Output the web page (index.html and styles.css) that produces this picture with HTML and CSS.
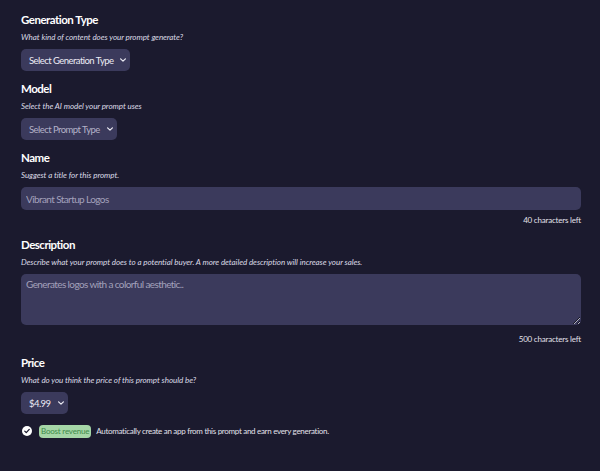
FILE: index.html
```html
<!DOCTYPE html>
<html lang="en">
<head>
<meta charset="utf-8">
<title>Prompt details</title>
<link rel="stylesheet" href="styles.css">
</head>
<body>
<form class="form">
  <section class="field">
    <h2 class="field-title">Generation Type</h2>
    <p class="field-hint">What kind of content does your prompt generate?</p>
    <div class="select">
      <span class="select-text">Select Generation Type</span>
      <svg class="chev" viewBox="0 0 10 6" width="6" height="4"><path d="M1 1l4 4 4-4" fill="none" stroke="currentColor" stroke-width="2" stroke-linecap="round" stroke-linejoin="round"/></svg>
    </div>
  </section>
  <section class="field">
    <h2 class="field-title">Model</h2>
    <p class="field-hint">Select the AI model your prompt uses</p>
    <div class="select muted">
      <span class="select-text">Select Prompt Type</span>
      <svg class="chev" viewBox="0 0 10 6" width="6" height="4"><path d="M1 1l4 4 4-4" fill="none" stroke="currentColor" stroke-width="2" stroke-linecap="round" stroke-linejoin="round"/></svg>
    </div>
  </section>
  <section class="field">
    <h2 class="field-title">Name</h2>
    <p class="field-hint">Suggest a title for this prompt.</p>
    <input class="text-input" type="text" placeholder="Vibrant Startup Logos">
    <p class="count">40 characters left</p>
  </section>
  <section class="field">
    <h2 class="field-title">Description</h2>
    <p class="field-hint">Describe what your prompt does to a potential buyer. A more detailed description will increase your sales.</p>
    <textarea class="text-area" placeholder="Generates logos with a colorful aesthetic.."></textarea>
    <p class="count">500 characters left</p>
  </section>
  <section class="field">
    <h2 class="field-title">Price</h2>
    <p class="field-hint">What do you think the price of this prompt should be?</p>
    <div class="select">
      <span class="select-text">$4.99</span>
      <svg class="chev" viewBox="0 0 10 6" width="6" height="4"><path d="M1 1l4 4 4-4" fill="none" stroke="currentColor" stroke-width="2" stroke-linecap="round" stroke-linejoin="round"/></svg>
    </div>
  </section>
  <div class="boost">
    <svg class="check" viewBox="0 0 20 20" width="10" height="10"><circle cx="10" cy="10" r="10" fill="#ffffff"/><path d="M5.5 10.2l3 3 6-6.4" fill="none" stroke="#1b1a2e" stroke-width="2.6" stroke-linecap="round" stroke-linejoin="round"/></svg>
    <span class="badge">Boost revenue</span>
    <span class="boost-text">Automatically create an app from this prompt and earn every generation.</span>
  </div>
</form>
</body>
</html>
```
FILE: styles.css
```css
* { box-sizing: border-box; }
html, body { margin: 0; padding: 0; }
body {
  background: #1b1a2e;
  color: #ffffff;
  font-family: Lato, "DejaVu Sans Condensed", sans-serif;
  width: 600px;
  height: 471px;
  overflow: hidden;
}
.form {
  display: flex;
  flex-direction: column;
  padding: 12px 19px 0 21px;
}
.field {
  display: flex;
  flex-direction: column;
  align-items: flex-start;
  margin-bottom: 10px;
}
.field-title {
  margin: 0 0 4px;
  font-size: 11.5px;
  line-height: 16px;
  font-weight: 700;
  letter-spacing: -0.5px;
  color: #ffffff;
}
.field-hint {
  margin: 0 0 6px;
  font-size: 8px;
  line-height: 11px;
  font-style: italic;
  letter-spacing: -0.05px;
  color: #dcdbe6;
}
.select {
  display: inline-flex;
  align-items: center;
  gap: 7px;
  height: 22px;
  padding: 0 4px 0 8px;
  background: #3b3a5c;
  border-radius: 5px;
  color: #ecebf4;
  font-size: 9.5px;
  letter-spacing: -0.55px;
}
.select.muted { color: #b4b2c8; }
.chev { display: block; color: #ecebf4; }
.text-input, .text-area {
  display: block;
  width: 100%;
  border: none;
  border-radius: 5px;
  background: #3b3a5c;
  color: #ecebf4;
  font-family: inherit;
  font-size: 10px;
  letter-spacing: -0.6px;
  outline: none;
  margin: 0;
}
.text-input { height: 23px; padding: 0 5px; }
.text-area { height: 51px; padding: 4px 5px; resize: vertical; }
.text-input::placeholder, .text-area::placeholder { color: #a3a1bb; }
.count {
  align-self: stretch;
  margin: 5px 0 0;
  text-align: right;
  font-size: 8px;
  line-height: 11px;
  letter-spacing: -0.2px;
  color: #e2e1ea;
}
.field:nth-child(3) .count { margin-bottom: 1px; }
.field:nth-child(4) .count { margin-top: 9px; }
.boost {
  display: flex;
  align-items: center;
  height: 14px;
}
.check { display: block; margin-left: 1px; }
.badge {
  margin-left: 7px;
  height: 13px;
  padding: 0 2px;
  border-radius: 4px;
  background: #a5d6a7;
  color: #3d8b47;
  font-size: 8px;
  line-height: 13px;
  letter-spacing: -0.2px;
}
.boost-text {
  margin-left: 5px;
  font-size: 8px;
  letter-spacing: -0.3px;
  color: #e2e1ea;
}
```
